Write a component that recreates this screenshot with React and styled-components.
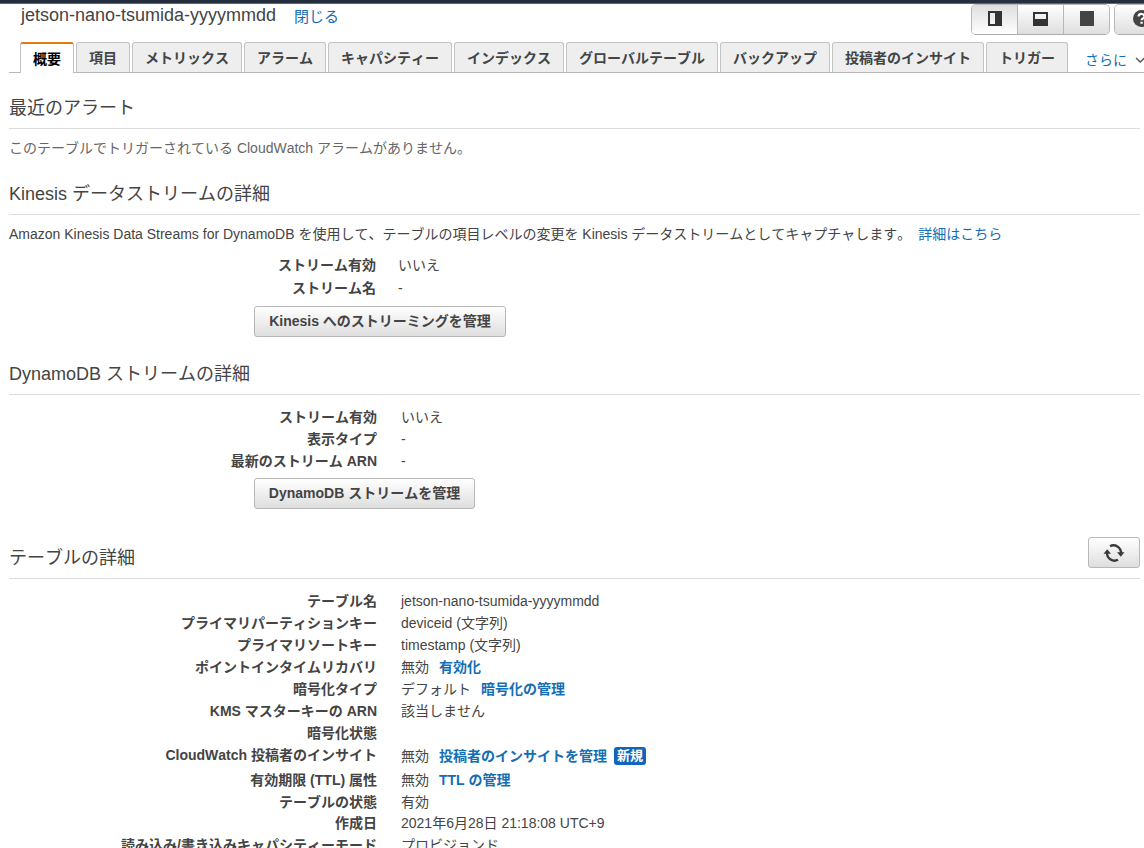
import React from "react";
import styled, { createGlobalStyle } from "styled-components";

const GlobalStyle = createGlobalStyle`
  * { box-sizing: border-box; }
  body {
    margin: 0;
    background: #fff;
    color: #444;
    font: 14px "Liberation Sans", "Noto Sans CJK JP", sans-serif;
    font-kerning: none;
    overflow: hidden;
  }
`;

const Page = styled.div`
  width: 1144px;
  height: 848px;
  overflow: hidden;
  white-space: nowrap;
`;

const TopBar = styled.div`
  height: 4px;
  background: #232f3e;
  border-bottom: 1px solid #5d6672;
`;

const Header = styled.header`
  display: flex;
  height: 38px;
  padding-left: 21px;
`;

const Title = styled.h1`
  margin: 0;
  font-size: 18px;
  font-weight: normal;
  line-height: 22px;
  height: 24px;
`;

const Link = styled.a`
  color: #146eb4;
  font-weight: ${(p) => (p.$bold ? "bold" : "normal")};
  margin-left: ${(p) => p.$gap || 0}px;
`;

const CloseLink = styled(Link)`
  font-size: 15px;
  line-height: 25px;
  height: 25px;
`;

const Controls = styled.div`
  display: flex;
  gap: 4px;
  flex: none;
  margin-left: auto;
  width: 173px;
  overflow: hidden;
`;

const ButtonGroup = styled.div`
  display: flex;
  flex: none;
  height: 31px;
  border: 1px solid #b8b8b8;
  border-bottom-color: #adadad;
  border-radius: 5px;
  overflow: hidden;
`;

const LayoutButton = styled.button`
  display: flex;
  align-items: center;
  justify-content: center;
  width: ${(p) => p.$width || 46}px;
  padding: 0 0 2px;
  border: 0;
  border-left: ${(p) => (p.$first ? "0" : "1px solid #b8b8b8")};
  background: ${(p) =>
    p.$active
      ? "linear-gradient(#dedede, #fff)"
      : "linear-gradient(#fff, #dedede)"};
`;

const Tabs = styled.nav`
  display: flex;
  gap: 2px;
  height: 31px;
  margin-left: 9px;
  padding-left: 11px;
  border-bottom: 1px solid #b8b8b8;
`;

const Tab = styled.div`
  flex: none;
  height: ${(p) => (p.$active ? 31 : 30)}px;
  padding: 0 12px;
  border: 1px solid #c4c4c4;
  border-top: ${(p) => (p.$active ? "2px solid #e47911" : "1px solid #c4c4c4")};
  border-bottom: 0;
  border-radius: 3px 3px 0 0;
  background: ${(p) => (p.$active ? "#fff" : "#eee")};
  color: ${(p) => (p.$active ? "#000" : "#444")};
  font-weight: bold;
  line-height: 31px;
`;

const MoreLink = styled.div`
  display: flex;
  align-items: center;
  flex: none;
  gap: 8px;
  height: 30px;
  margin-left: 15px;
  padding-top: 3px;
  color: #146eb4;
`;

const Content = styled.main`
  padding: 13px 4px 0 9px;
`;

const Section = styled.section`
  height: ${(p) => p.$height}px;
`;

const Heading = styled.div`
  display: flex;
  justify-content: space-between;
  height: 43px;
  border-bottom: 1px solid #dcdcdc;
`;

const HeadingText = styled.h2`
  margin: 0;
  font-size: 18px;
  font-weight: normal;
  line-height: 44px;
  height: 42px;
`;

const Paragraph = styled.p`
  margin: 8px 0 0;
  height: 22px;
  line-height: 22px;
  color: ${(p) => (p.$muted ? "#666" : "#444")};
`;

const Rows = styled.dl`
  margin: ${(p) => p.$top}px 0 0;
`;

const Row = styled.div`
  display: flex;
  height: ${(p) => p.$height || 22}px;
  line-height: 22px;
`;

const Label = styled.dt`
  width: ${(p) => p.$width || 368}px;
  text-align: right;
  font-weight: bold;
`;

const Value = styled.dd`
  margin: 0 0 0 ${(p) => p.$gap || 24}px;
  padding-top: ${(p) => p.$shift || 0}px;
`;

const Badge = styled.span`
  display: inline-block;
  height: 18px;
  margin-left: 7px;
  padding: 0 3px;
  border-radius: 3px;
  background: #1166bb;
  color: #fff;
  font-size: 13px;
  font-weight: bold;
  line-height: 18px;
  vertical-align: top;
  position: relative;
  top: 2px;
`;

const Button = styled.button`
  display: flex;
  align-items: center;
  justify-content: center;
  flex: none;
  width: ${(p) => p.$width}px;
  height: 31px;
  margin: ${(p) => p.$margin || "0"};
  padding: 0;
  border: 1px solid #b8b8b8;
  border-radius: 3px;
  background: linear-gradient(#fff, #dedede);
  color: #444;
  font: bold 14px/29px "Liberation Sans", "Noto Sans CJK JP", sans-serif;
  font-kerning: none;
  white-space: nowrap;
`;

const SideIcon = () => (
  <svg width="14" height="15" viewBox="0 0 14 15">
    <path fill="#333" fillRule="evenodd" d="M0 0h14v15H0zM2 2v11h5V2z" />
  </svg>
);

const BottomIcon = () => (
  <svg width="15" height="14" viewBox="0 0 15 14">
    <path fill="#333" fillRule="evenodd" d="M0 0h15v14H0zM2 2v5h11V2z" />
  </svg>
);

const FullIcon = () => (
  <svg width="14" height="15" viewBox="0 0 14 15">
    <path fill="#444" d="M0 0h14v15H0z" />
  </svg>
);

const HelpIcon = () => (
  <svg width="17" height="17" viewBox="0 0 16 16">
    <circle cx="8" cy="8" r="8" fill="#444" />
    <path
      d="M5.200 6.100c.2-3.400 5.800-3 5.500.1C10.500 8 8.200 7.700 8.100 9.700"
      fill="none"
      stroke="#fff"
      strokeWidth="2"
    />
    <path fill="#fff" d="M7 11h2.200v2H7z" />
  </svg>
);

const ChevronIcon = () => (
  <svg width="11" height="8" viewBox="0 0 11 8">
    <path d="M1 3l4.200 4L9.500 3" fill="none" stroke="#555" strokeWidth="1.4" />
  </svg>
);

const RefreshIcon = () => (
  <svg width="22" height="18" viewBox="0 0 22 18">
    <g fill="none" stroke="#3a3a3a" strokeWidth="2.400">
      <path d="M7 2.200A7.600 7.600 0 0 1 18 9" />
      <path d="M15 15.800A7.600 7.600 0 0 1 4 9" />
    </g>
    <path fill="#3a3a3a" d="M14 8.300h7.500l-3.700 4.400zM.5 9.700H8L4.200 5.300z" />
  </svg>
);

const tabs = [
  "概要",
  "項目",
  "メトリックス",
  "アラーム",
  "キャパシティー",
  "インデックス",
  "グローバルテーブル",
  "バックアップ",
  "投稿者のインサイト",
  "トリガー",
];

const details = [
  { label: "テーブル名", value: "jetson-nano-tsumida-yyyymmdd" },
  { label: "プライマリパーティションキー", value: "deviceid (文字列)" },
  { label: "プライマリソートキー", value: "timestamp (文字列)" },
  { label: "ポイントインタイムリカバリ", value: "無効", link: "有効化" },
  { label: "暗号化タイプ", value: "デフォルト", link: "暗号化の管理" },
  { label: "KMS マスターキーの ARN", value: "該当しません" },
  { label: "暗号化状態", value: "" },
  {
    label: "CloudWatch 投稿者のインサイト",
    value: "無効",
    link: "投稿者のインサイトを管理",
    badge: "新規",
    height: 25,
    shift: 1,
  },
  { label: "有効期限 (TTL) 属性", value: "無効", link: "TTL の管理" },
  { label: "テーブルの状態", value: "有効", height: 21 },
  { label: "作成日", value: "2021年6月28日 21:18:08 UTC+9" },
  { label: "読み込み/書き込みキャパシティーモード", value: "プロビジョンド" },
];

export default function App() {
  return (
    <Page>
      <GlobalStyle />
      <TopBar />
      <Header>
        <Title>jetson-nano-tsumida-yyyymmdd</Title>
        <CloseLink $gap={18}>閉じる</CloseLink>
        <Controls>
          <ButtonGroup>
            <LayoutButton $active $first $width={45}>
              <SideIcon />
            </LayoutButton>
            <LayoutButton>
              <BottomIcon />
            </LayoutButton>
            <LayoutButton>
              <FullIcon />
            </LayoutButton>
          </ButtonGroup>
          <ButtonGroup>
            <LayoutButton $first $width={52}>
              <HelpIcon />
            </LayoutButton>
          </ButtonGroup>
        </Controls>
      </Header>
      <Tabs>
        {tabs.map((name, i) => (
          <Tab key={name} $active={i === 0}>
            {name}
          </Tab>
        ))}
        <MoreLink>
          さらに
          <ChevronIcon />
        </MoreLink>
      </Tabs>
      <Content>
        <Section $height={86}>
          <Heading>
            <HeadingText>最近のアラート</HeadingText>
          </Heading>
          <Paragraph $muted>
            このテーブルでトリガーされている CloudWatch アラームがありません。
          </Paragraph>
        </Section>
        <Section $height={180}>
          <Heading>
            <HeadingText>Kinesis データストリームの詳細</HeadingText>
          </Heading>
          <Paragraph>
            Amazon Kinesis Data Streams for DynamoDB
            を使用して、テーブルの項目レベルの変更を Kinesis
            データストリームとしてキャプチャします。
            <Link $gap={7}>詳細はこちら</Link>
          </Paragraph>
          <Rows $top={9}>
            <Row $height={23}>
              <Label $width={367}>ストリーム有効</Label>
              <Value $gap={22}>いいえ</Value>
            </Row>
            <Row>
              <Label $width={367}>ストリーム名</Label>
              <Value $gap={22}>-</Value>
            </Row>
          </Rows>
          <Button $width={252} $margin="7px 0 0 245px">
            Kinesis へのストリーミングを管理
          </Button>
        </Section>
        <Section $height={184}>
          <Heading>
            <HeadingText>DynamoDB ストリームの詳細</HeadingText>
          </Heading>
          <Rows $top={11}>
            <Row>
              <Label>ストリーム有効</Label>
              <Value>いいえ</Value>
            </Row>
            <Row>
              <Label>表示タイプ</Label>
              <Value>-</Value>
            </Row>
            <Row>
              <Label>最新のストリーム ARN</Label>
              <Value>-</Value>
            </Row>
          </Rows>
          <Button $width={221} $margin="6px 0 0 245px">
            DynamoDB ストリームを管理
          </Button>
        </Section>
        <Section $height={330}>
          <Heading>
            <HeadingText>テーブルの詳細</HeadingText>
            <Button $width={52} $margin="1px 0 0">
              <RefreshIcon />
            </Button>
          </Heading>
          <Rows $top={11}>
            {details.map((d) => (
              <Row key={d.label} $height={d.height}>
                <Label>{d.label}</Label>
                <Value $shift={d.shift}>
                  {d.value}
                  {d.link && (
                    <Link $bold $gap={10}>
                      {d.link}
                    </Link>
                  )}
                  {d.badge && <Badge>{d.badge}</Badge>}
                </Value>
              </Row>
            ))}
          </Rows>
        </Section>
      </Content>
    </Page>
  );
}
